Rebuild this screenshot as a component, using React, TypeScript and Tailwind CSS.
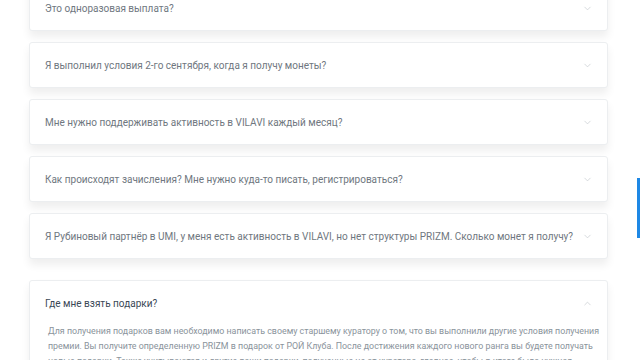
import React, { useState } from 'react';
import { ChevronDown, ChevronUp } from 'lucide-react';

const faqItems = [
  { q: 'Это одноразовая выплата?', a: [] as string[] },
  { q: 'Я выполнил условия 2-го сентября, когда я получу монеты?', a: [] as string[] },
  { q: 'Мне нужно поддерживать активность в VILAVI каждый месяц?', a: [] as string[] },
  { q: 'Как происходят зачисления? Мне нужно куда-то писать, регистрироваться?', a: [] as string[] },
  {
    q: 'Я Рубиновый партнёр в UMI, у меня есть активность в VILAVI, но нет структуры PRIZM. Сколько монет я получу?',
    a: [] as string[],
  },
  {
    q: 'Где мне взять подарки?',
    a: [
      'Для получения подарков вам необходимо написать своему старшему куратору о том, что вы выполнили другие условия получения',
      'премии. Вы получите определенную PRIZM в подарок от РОЙ Клуба. После достижения каждого нового ранга вы будете получать',
      'новые подарки. Также учитываются и другие ваши подарки, полученные не от куратора, главное, чтобы в итоге была нужная',
      'сумма.',
    ],
  },
];

export default function App() {
  const [openIndex, setOpenIndex] = useState(5);

  return (
    <div
      className="relative w-[640px] h-[360px] overflow-hidden bg-white"
      style={{ fontFamily: 'Roboto, "Noto Sans", sans-serif' }}
    >
      {/* FAQ list */}
      <div className="ml-[29px] w-[579px] -mt-[15px] flex flex-col">
        {faqItems.map((item, index) => {
          const isOpen = openIndex === index;
          return (
            <div
              key={item.q}
              className={`border border-[#eceef0] rounded-[3px] bg-white shadow-[0_6px_8px_rgba(0,0,0,0.065)] ${
                isOpen ? 'mt-[21px]' : index === 0 ? '' : 'mt-[11px]'
              }`}
            >
              <button
                onClick={() => setOpenIndex(isOpen ? -1 : index)}
                className="w-full h-[44px] flex items-center justify-between pl-[15px] pr-[14px] text-left"
              >
                <span
                  className={`text-[10px] whitespace-nowrap ${
                    isOpen ? 'text-[#3a4856]' : 'text-[#6f7780]'
                  }`}
                >
                  {item.q}
                </span>
                {isOpen ? (
                  <ChevronUp className="w-[11px] h-[11px] text-[#c4c9ce]" strokeWidth={1.5} />
                ) : (
                  <ChevronDown className="w-[11px] h-[11px] text-[#c4c9ce]" strokeWidth={1.5} />
                )}
              </button>
              {isOpen && item.a.length > 0 && (
                <div className="pl-[18px] pr-[8px] -mt-[1px] pb-4 text-[8.85px] leading-[15px] text-[#8a939b]">
                  {item.a.map((line) => (
                    <span key={line} className="block whitespace-nowrap">
                      {line}
                    </span>
                  ))}
                </div>
              )}
            </div>
          );
        })}
      </div>

      {/* Right edge scroll marker */}
      <div className="absolute right-0 top-[178px] w-[3px] h-[60px] bg-[#1e88e5]" />
    </div>
  );
}
